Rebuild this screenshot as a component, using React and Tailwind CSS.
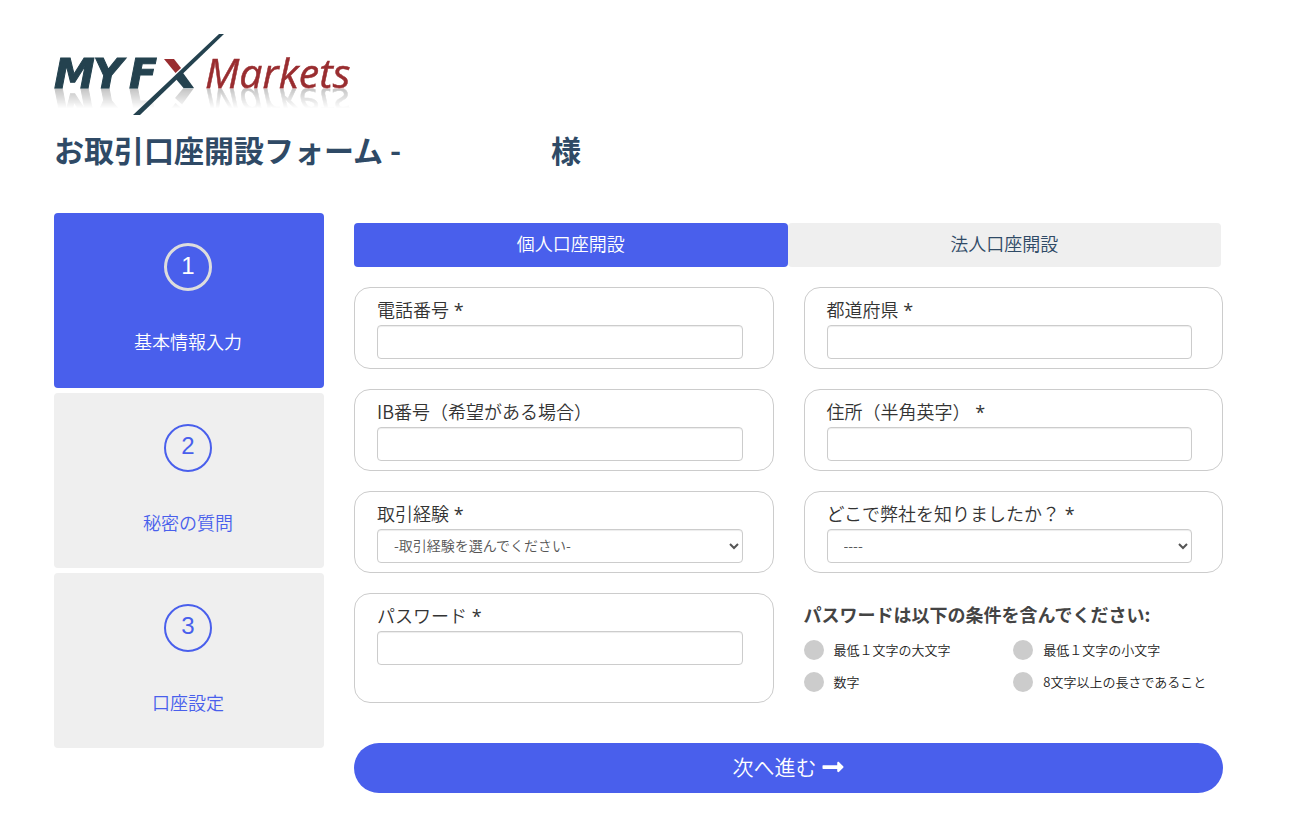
import React, { useState } from 'react';
import { FaLongArrowAltRight } from 'react-icons/fa';

const STEPS = ['基本情報入力', '秘密の質問', '口座設定'];
const TABS = ['個人口座開設', '法人口座開設'];
const PASSWORD_RULES = [
  '最低１文字の大文字',
  '最低１文字の小文字',
  '数字',
  '8文字以上の長さであること',
];

const controlClass =
  'block w-full h-[34px] rounded border border-[#ccc] bg-white text-sm text-[#555] shadow-[inset_0_1px_1px_rgba(0,0,0,0.075)]';

function Logo() {
  return (
    <div className="relative h-[82px] w-[300px]">
      <svg
        className="block overflow-visible [-webkit-box-reflect:below_0px_linear-gradient(transparent_62%,rgba(0,0,0,0.32))]"
        width="300"
        height="54"
        viewBox="0 0 300 54"
      >
        <text
          x="0 39 75"
          y="54"
          fontSize="41"
          fontWeight="700"
          fontStyle="italic"
          fontFamily="DejaVu Sans, sans-serif"
          fill="#24424f"
          stroke="#24424f"
          strokeWidth="1"
        >
          MYF
        </text>
        <path d="M110 25 L120 25 L127 34 L121.5 39 Z" fill="#992d30" />
        <path d="M121 44 L128 37.5 L140 54 L129.5 54 Z" fill="#24424f" />
        <text
          x="151"
          y="54"
          fontSize="41"
          fontWeight="400"
          fontStyle="italic"
          fontFamily="Open Sans, sans-serif"
          fill="#992d30"
          stroke="#992d30"
          strokeWidth="0.5"
        >
          Markets
        </text>
      </svg>
      {/* takes the colour out of the reflection */}
      <div className="absolute inset-x-0 top-[55px] bottom-0 backdrop-grayscale" />
      <svg className="absolute inset-0" width="300" height="82" viewBox="0 0 300 82" aria-hidden="true">
        <path d="M165 0 L170 0 L86 81 L79 81 Z" fill="#24424f" />
      </svg>
    </div>
  );
}

function Step({ number, label, active }) {
  return (
    <li
      className={`flex h-[175px] flex-col items-center rounded pr-0.5 ${
        active ? 'bg-[#495fec] pt-[30px] text-white' : 'bg-[#efefef] pt-[31px] text-[#495fec]'
      }`}
    >
      <span
        className={`flex size-12 justify-center rounded-full font-['Liberation_Sans',sans-serif] text-2xl leading-10 font-normal ${
          active ? 'border-3 border-[#ddd]' : 'border-2 border-[#495fec]'
        }`}
      >
        {number}
      </span>
      <span className="mt-[37px] text-lg leading-[26px]">{label}</span>
    </li>
  );
}

function Field({ id, label, required, children }) {
  return (
    <div className="rounded-2xl border border-[#ccc] pt-2 pr-[30px] pb-[9px] pl-[22px]">
      <label htmlFor={id} className="mb-[3px] block text-lg leading-[26px] text-[#333]">
        {label}
        {required && <span className="font-['Open_Sans',sans-serif] leading-none font-normal"> *</span>}
      </label>
      {children}
    </div>
  );
}

function TextField({ id, label, required, type = 'text' }) {
  return (
    <Field id={id} label={label} required={required}>
      <input id={id} name={id} type={type} className={`${controlClass} px-3`} />
    </Field>
  );
}

function SelectField({ id, label, required, placeholder }) {
  return (
    <Field id={id} label={label} required={required}>
      <select id={id} name={id} className={`${controlClass} pb-0.5 pl-3`}>
        <option value="">{placeholder}</option>
      </select>
    </Field>
  );
}

export default function App() {
  const [tab, setTab] = useState(0);

  return (
    <div className="bg-white pt-[34px] pr-[82px] pb-9 pl-[54px] font-['Noto_Sans_CJK_JP',sans-serif] font-[350]">
      <header>
        <Logo />
        <h1 className="mt-[11px] text-3xl leading-[44px] font-bold text-[#2f4a66]">
          お取引口座開設フォーム -<span className="inline-block w-[150px]" />様
        </h1>
      </header>

      <div className="mt-[42px] flex gap-[30px]">
        <ol className="flex w-[270px] shrink-0 flex-col gap-[5px]">
          {STEPS.map((label, i) => (
            <Step key={label} number={i + 1} label={label} active={i === 0} />
          ))}
        </ol>

        <form className="min-w-0 flex-1 pt-2.5" onSubmit={(e) => e.preventDefault()}>
          <div className="mr-0.5 flex">
            {TABS.map((label, i) => (
              <button
                key={label}
                type="button"
                onClick={() => setTab(i)}
                className={`h-11 flex-1 rounded pb-1 text-lg ${
                  tab === i ? 'bg-[#495fec] text-white' : 'bg-[#efefef] text-[#2f4a66]'
                }`}
              >
                {label}
              </button>
            ))}
          </div>

          <div className="mt-5 grid grid-cols-2 gap-x-[30px] gap-y-5">
            <TextField id="phone" label="電話番号" required type="tel" />
            <TextField id="prefecture" label="都道府県" required />
            <TextField id="ib" label="IB番号（希望がある場合）" />
            <TextField id="address" label="住所（半角英字）" required />
            <SelectField id="experience" label="取引経験" required placeholder="-取引経験を選んでください-" />
            <SelectField id="source" label="どこで弊社を知りましたか？" required placeholder="----" />
            <TextField id="password" label="パスワード" required type="password" />
            <div className="h-[110px] pt-[7px]">
              <h2 className="text-lg leading-7 font-bold text-[#444]">
                パスワードは以下の条件を含んでください:
              </h2>
              <ul className="mt-3 grid grid-cols-2 gap-y-3">
                {PASSWORD_RULES.map((rule) => (
                  <li key={rule} className="flex items-center gap-2.5 text-[13px] leading-5 text-[#222]">
                    <span className="size-5 shrink-0 rounded-full bg-[#ccc]" />
                    {rule}
                  </li>
                ))}
              </ul>
            </div>
          </div>

          <button
            type="submit"
            className="mt-10 flex h-[50px] w-full items-center justify-center gap-1 rounded-full bg-[#495fec] pb-0.5 text-[21px] text-white"
          >
            次へ進む
            <FaLongArrowAltRight size={24} />
          </button>
        </form>
      </div>
    </div>
  );
}
